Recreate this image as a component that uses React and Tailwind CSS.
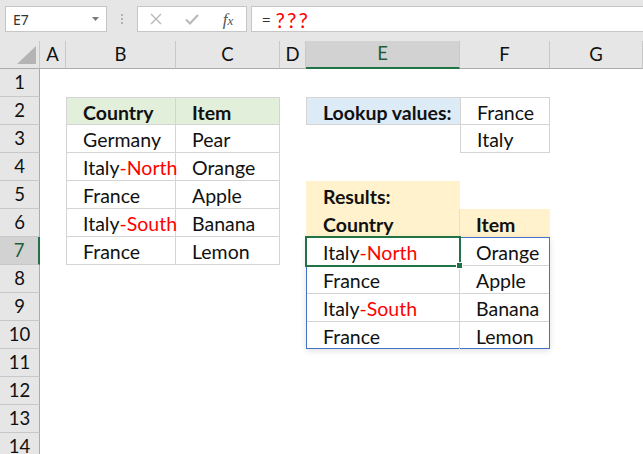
import React from "react";

const R = ({ children }) => <span className="text-[#ff0000]">{children}</span>;

const COLS = [
  ["A", "col-start-2", false],
  ["B", "col-start-3", false],
  ["C", "col-start-4", false],
  ["D", "col-start-5", false],
  ["E", "col-start-6", true],
  ["F", "col-start-7", false],
  ["G", "col-start-8", false],
];

const ROWS = [
  "row-start-2",
  "row-start-3",
  "row-start-4",
  "row-start-5",
  "row-start-6",
  "row-start-7",
  "row-start-8",
  "row-start-9",
  "row-start-10",
  "row-start-11",
  "row-start-12",
  "row-start-13",
  "row-start-14",
  "row-start-15",
];

function TopBar() {
  return (
    <div className="h-[41px] bg-[#e6e6e6] flex items-start pt-[6px]">
      <div className="ml-[5px] w-[102px] h-[26px] bg-white border border-[#c6c6c6] flex items-center justify-between pl-[7px] pr-[7px]">
        <span className="font-['Noto_Sans',sans-serif] text-[14px] text-[#333]">E7</span>
        <svg width="7" height="4" viewBox="0 0 7 4">
          <path d="M0 0H7L3.5 4Z" fill="#7a7a7a" />
        </svg>
      </div>
      <div className="w-[30px] h-[26px] flex flex-col items-center justify-center gap-[2px]">
        <span className="w-[2px] h-[2px] bg-[#b3b3b3]" />
        <span className="w-[2px] h-[2px] bg-[#b3b3b3]" />
        <span className="w-[2px] h-[2px] bg-[#b3b3b3]" />
      </div>
      <div className="w-[110px] h-[26px] bg-white border border-[#c6c6c6] flex items-center px-[7px] gap-[14px]">
        <span className="w-[22px] flex justify-center">
          <svg width="12" height="12" viewBox="0 0 12 12">
            <path d="M1 1L11 11M11 1L1 11" stroke="#b8b8b8" strokeWidth="1.4" />
          </svg>
        </span>
        <span className="w-[22px] flex justify-center">
          <svg width="14" height="11" viewBox="0 0 14 11">
            <path d="M1 5.5L5 9.5L13 1" stroke="#b8b8b8" strokeWidth="2" fill="none" />
          </svg>
        </span>
        <span className="w-[22px] flex justify-center items-baseline italic font-['Liberation_Serif',serif] text-[17px] text-[#555] leading-none">
          f<span className="text-[13px]">x</span>
        </span>
      </div>
      <div className="ml-[4px] flex-1 h-[26px] bg-white border-y border-l border-[#c6c6c6] flex items-center pl-[10px]">
        <span className="font-['Noto_Sans',sans-serif] text-[15px] text-[#333]">=</span>
        <span className="ml-[5px] text-[21px] tracking-[2px] text-[#ff0000] leading-none">???</span>
      </div>
    </div>
  );
}

const cellB = "border-[#d4d4d4]";

export default function App() {
  const t1 = [
    ["Country", "Item"],
    ["Germany", "Pear"],
    [<>Italy<R>-North</R></>, "Orange"],
    ["France", "Apple"],
    [<>Italy<R>-South</R></>, "Banana"],
    ["France", "Lemon"],
  ];
  const spill = [
    [<>Italy<R>-North</R></>, "Orange"],
    ["France", "Apple"],
    [<>Italy<R>-South</R></>, "Banana"],
    ["France", "Lemon"],
  ];
  return (
    <div className="w-[643px] h-[454px] overflow-hidden bg-white font-['Lato',sans-serif] text-[#111]">
      <TopBar />
      <div className="grid grid-cols-[40px_26px_110px_104px_26px_154px_90px_1fr] grid-rows-[repeat(15,28px)] text-[19.5px]">
        {/* corner */}
        <div className="col-start-1 row-start-1 relative bg-[#e6e6e6] border-r border-b border-r-[#c8c8c8] border-b-[#ababab]">
          <svg className="absolute right-[3px] bottom-[4px]" width="19" height="18" viewBox="0 0 19 18">
            <path d="M19 0V18H0Z" fill="#b4b4b4" />
          </svg>
        </div>
        {COLS.map(([l, c, sel]) => (
          <div
            key={l}
            className={`${c} row-start-1 flex items-center justify-center text-[18.5px] border-r border-r-[#c8c8c8] ${
              sel
                ? "bg-[#d2d2d2] border-b-2 border-b-[#217346] text-[#1e5e3a]"
                : "bg-[#e6e6e6] border-b border-b-[#ababab] text-[#111]"
            }`}
          >
            {l}
          </div>
        ))}
        {ROWS.map((r, i) => (
          <div
            key={r}
            className={`col-start-1 ${r} flex items-center justify-center text-[18.5px] pt-[1px] border-b border-b-[#c8c8c8] ${
              i === 6
                ? "bg-[#d2d2d2] border-r-2 border-r-[#217346] text-[#1e5e3a]"
                : "bg-[#e6e6e6] border-r border-r-[#ababab] text-[#111]"
            }`}
          >
            {i + 1}
          </div>
        ))}

        {/* Table 1: B2:C7 */}
        <div className={`col-start-3 col-span-2 row-start-3 row-span-6 border-l border-t ${cellB} grid grid-cols-[109px_104px] grid-rows-[27px_repeat(5,28px)]`}>
          {t1.map((row, ri) =>
            row.map((v, ci) => (
              <div
                key={`${ri}-${ci}`}
                className={`flex items-center pt-[3px] border-r border-b ${cellB} pl-[16px] ${
                  ri === 0 ? "bg-[#e2efda] font-bold" : ""
                } whitespace-nowrap`}
              >
                {v}
              </div>
            ))
          )}
        </div>

        {/* Lookup values */}
        <div className={`col-start-6 row-start-3 bg-[#ddebf7] border-l border-t border-b ${cellB} flex items-center pt-[3px] pl-[16px] font-bold whitespace-nowrap`}>
          Lookup values:
        </div>
        <div className={`col-start-7 row-start-3 row-span-2 border-l border-t ${cellB} grid grid-rows-[27px_28px]`}>
          <div className={`flex items-center pt-[3px] pl-[16px] border-r border-b ${cellB}`}>France</div>
          <div className={`flex items-center pt-[3px] pl-[16px] border-r border-b ${cellB}`}>Italy</div>
        </div>

        {/* Results header */}
        <div className="col-start-6 row-start-6 bg-[#fff2cc] flex items-center pt-[3px] pl-[17px] font-bold">Results:</div>
        <div className="col-start-6 row-start-7 bg-[#fff2cc] flex items-center pt-[3px] pl-[17px] font-bold border-r border-r-[#ece0bd]">Country</div>
        <div className="col-start-7 row-start-7 bg-[#fff2cc] flex items-center pt-[3px] pl-[16px] font-bold">Item</div>

        {/* Spill range E7:F10 */}
        <div className="col-start-6 col-span-2 row-start-8 row-span-4 relative border border-[#4472c4] shadow-[0_2px_6px_rgba(0,0,0,0.12)] grid grid-cols-[153px_89px] grid-rows-[28px_28px_28px_27px]">
          {spill.map((row, ri) =>
            row.map((v, ci) => (
              <div
                key={`${ri}-${ci}`}
                className={`flex items-center pt-[3px] pl-[16px] whitespace-nowrap ${cellB} ${ci === 0 ? "border-r" : ""} ${
                  ri < 3 ? "border-b" : ""
                }`}
              >
                {v}
              </div>
            ))
          )}
          <div className="absolute left-[-2px] top-[-2px] w-[156px] h-[31px] border-2 border-[#217346] pointer-events-none">
            <div className="absolute right-[-4px] bottom-[-4px] w-[7px] h-[7px] bg-[#217346] border border-white" />
          </div>
        </div>
      </div>
    </div>
  );
}
